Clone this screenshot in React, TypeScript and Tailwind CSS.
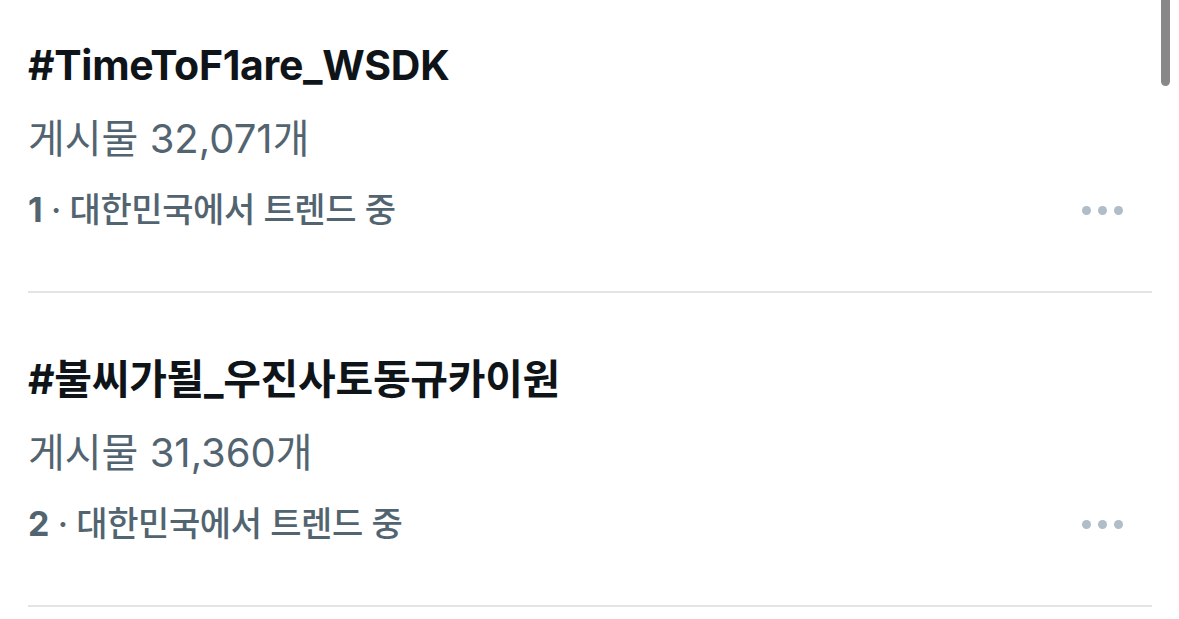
type Trend = { rank: number; tag: string; posts: string };

const trends: Trend[] = [
  { rank: 1, tag: "#TimeToF1are_WSDK", posts: "32,071" },
  { rank: 2, tag: "#불씨가될_우진사토동규카이원", posts: "31,360" },
];

function TrendRow({ trend }: { trend: Trend }) {
  return (
    <div className="border-b-2 border-[#e2e4e6] pt-[61px] pb-[59px]">
      <div className="flex items-end justify-between">
        <div className="flex flex-col">
          <p className="text-[41px] font-bold leading-[50px] text-[#0f1419] tracking-[-0.3px]">
            {trend.tag}
          </p>
          <p className="text-[40px] leading-[48px] mt-[25px] text-[#536471]">
            게시물 {trend.posts}개
          </p>
          <p className="text-[34px] font-medium leading-[44px] mt-[25px] text-[#536471] tracking-[-0.4px]">
            <span className="font-bold">{trend.rank}</span> · 대한민국에서 트렌드 중
          </p>
        </div>
        <div className="flex gap-[7px] mb-[17px] mr-[29px]">
          <span className="w-[9px] h-[9px] rounded-full bg-[#aebdc8]" />
          <span className="w-[9px] h-[9px] rounded-full bg-[#aebdc8]" />
          <span className="w-[9px] h-[9px] rounded-full bg-[#aebdc8]" />
        </div>
      </div>
    </div>
  );
}

export default function App() {
  return (
    <div
      className="relative w-[1179px] h-[619px] overflow-hidden bg-white"
      style={{ fontFamily: 'Inter, "Noto Sans CJK KR", sans-serif' }}
    >
      {/* scroll indicator */}
      <div className="absolute left-[1161px] top-[-10px] w-[9px] h-[96px] rounded-full bg-[#888888]" />

      <div className="ml-[28px] mr-[27px] -mt-[21px]">
        {trends.map((t) => (
          <TrendRow key={t.rank} trend={t} />
        ))}
      </div>
    </div>
  );
}
